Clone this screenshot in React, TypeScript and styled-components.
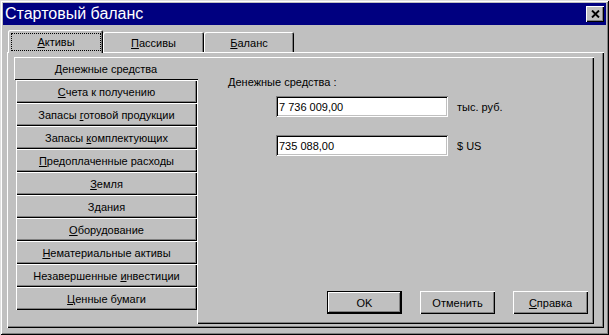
import { FC } from 'react';
import styled, { createGlobalStyle } from 'styled-components';

const GlobalStyle = createGlobalStyle`
  body {
    margin: 0;
    background: #c0c0c0;
  }

  #root {
    font-family: "Liberation Sans", Arial, sans-serif;
    font-size: 11px;
    color: #000;
  }
`;

const raised =
  'inset 1px 1px #fff, inset -1px -1px #000, inset -2px -2px #808080';

const StyledWindow = styled.div`
  width: 609px;
  height: 335px;
  box-sizing: border-box;
  padding: 3px;
  background: #c0c0c0;
  box-shadow: inset 1px 1px #dfdfdf, inset -1px -1px #000,
    inset 2px 2px #fff, inset -2px -2px #808080;
  display: flex;
  flex-direction: column;
`;

const TitleBar = styled.div`
  flex: none;
  height: 22px;
  padding: 0 2px 0 2px;
  background: #000080;
  color: #fff;
  display: flex;
  align-items: center;
  justify-content: space-between;
`;

const Title = styled.div`
  font-size: 16px;
  line-height: 22px;
`;

const CloseButton = styled.button`
  width: 18px;
  height: 16px;
  padding: 0;
  border: none;
  background: #c0c0c0;
  box-shadow: ${raised};
  display: flex;
  align-items: center;
  justify-content: center;
`;

const Body = styled.div`
  flex: 1;
  display: flex;
  flex-direction: column;
  padding: 5px 2px 4px 4px;
`;

const TabStrip = styled.div`
  flex: none;
  height: 22px;
  padding-left: 1px;
  display: flex;
  align-items: flex-end;
  position: relative;
  z-index: 1;
`;

const Tab = styled.div<{ $active?: boolean; $width: number }>`
  box-sizing: border-box;
  width: ${(p) => p.$width}px;
  height: ${(p) => (p.$active ? 23 : 20)}px;
  margin-bottom: ${(p) => (p.$active ? -1 : 0)}px;
  padding: ${(p) => (p.$active ? '4px 3px 3px 4px' : '2px 2px 0 2px')};
  background: #c0c0c0;
  border-radius: 2px 2px 0 0;
  box-shadow: inset 1px 1px #fff, inset -1px 0 #000, inset -2px 0 #808080;
  display: flex;
  align-items: stretch;
  justify-content: center;
`;

const TabFocus = styled.div<{ $focused?: boolean }>`
  flex: 1;
  outline: ${(p) => (p.$focused ? '1px dotted #000' : 'none')};
  display: flex;
  align-items: center;
  justify-content: center;
`;

const TabPanel = styled.div`
  flex: 1;
  display: flex;
  padding: 5px 10px 4px 7px;
  box-shadow: ${raised};
`;

const SideTabs = styled.div`
  flex: none;
  width: 183px;
  display: flex;
  flex-direction: column;
  position: relative;
  z-index: 1;
`;

const SideTab = styled.div<{ $active?: boolean }>`
  flex: none;
  height: 23px;
  margin-left: ${(p) => (p.$active ? 0 : 2)}px;
  margin-right: ${(p) => (p.$active ? -1 : 0)}px;
  background: #c0c0c0;
  box-shadow: ${(p) =>
    p.$active ? 'inset 1px 1px #fff, inset 0 -1px #000' : raised};
  display: flex;
  align-items: center;
  justify-content: center;
  white-space: nowrap;
`;

const Page = styled.div`
  flex: 1;
  display: flex;
  flex-direction: column;
  padding: 19px 6px 10px 31px;
  box-shadow: ${raised};
`;

const Heading = styled.div`
  line-height: 13px;
`;

const Fields = styled.div`
  display: flex;
  flex-direction: column;
  gap: 18px;
  margin: 7px 0 0 48px;
`;

const FieldRow = styled.div`
  display: flex;
  align-items: center;
`;

const Input = styled.input`
  box-sizing: border-box;
  width: 172px;
  height: 21px;
  padding: 1px 2px 0 3px;
  border: none;
  outline: none;
  background: #fff;
  font: inherit;
  color: #000;
  box-shadow: inset 1px 1px #808080, inset -1px -1px #fff,
    inset 2px 2px #000, inset -2px -2px #c0c0c0;
`;

const Unit = styled.span`
  margin-left: 9px;
`;

const Spacer = styled.div`
  flex: 1;
`;

const ButtonRow = styled.div`
  display: flex;
  justify-content: flex-end;
  gap: 18px;
`;

const Button = styled.button<{ $default?: boolean }>`
  width: 75px;
  height: 23px;
  padding: 0;
  border: none;
  background: #c0c0c0;
  font: inherit;
  color: #000;
  box-shadow: ${(p) =>
    p.$default
      ? 'inset 0 0 0 1px #000, inset -2px -2px #000, inset 2px 2px #fff, inset -3px -3px #808080'
      : raised};
`;

// "&" marks the underlined access key, as in a Windows resource
const Label: FC<{ text: string }> = ({ text }) => {
  const i = text.indexOf('&');
  if (i < 0) return <span>{text}</span>;
  return (
    <span>
      {text.slice(0, i)}
      <u>{text[i + 1]}</u>
      {text.slice(i + 2)}
    </span>
  );
};

const tabs = [
  { label: '&Активы', width: 95 },
  { label: '&Пассивы', width: 101 },
  { label: '&Баланс', width: 90 },
];

const assets = [
  '&Денежные средства',
  '&Счета к получению',
  'Запасы &готовой продукции',
  'Запасы &комплектующих',
  '&Предоплаченные расходы',
  '&Земля',
  'З&дания',
  '&Оборудование',
  '&Нематериальные активы',
  'Незавершенные &инвестиции',
  '&Ценные бумаги',
];

const App: FC = () => {
  return (
    <>
      <GlobalStyle />
      <StyledWindow>
        <TitleBar>
          <Title>Стартовый баланс</Title>
          <CloseButton aria-label="Закрыть">
            <svg width="9" height="8" viewBox="0 0 9 8">
              <path
                d="M1 0.5 L8 7.5 M8 0.5 L1 7.5"
                stroke="#000"
                strokeWidth="1.9"
                fill="none"
              />
            </svg>
          </CloseButton>
        </TitleBar>
        <Body>
          <TabStrip>
            {tabs.map((t, i) => (
              <Tab key={t.label} $active={i === 0} $width={t.width}>
                <TabFocus $focused={i === 0}>
                  <Label text={t.label} />
                </TabFocus>
              </Tab>
            ))}
          </TabStrip>
          <TabPanel>
            <SideTabs>
              {assets.map((a, i) => (
                <SideTab key={a} $active={i === 0}>
                  <Label text={a} />
                </SideTab>
              ))}
            </SideTabs>
            <Page>
              <Heading>Денежные средства :</Heading>
              <Fields>
                <FieldRow>
                  <Input defaultValue="7 736 009,00" />
                  <Unit>тыс. руб.</Unit>
                </FieldRow>
                <FieldRow>
                  <Input defaultValue="735 088,00" />
                  <Unit>$ US</Unit>
                </FieldRow>
              </Fields>
              <Spacer />
              <ButtonRow>
                <Button $default>OK</Button>
                <Button>Отменить</Button>
                <Button>
                  <Label text="&Справка" />
                </Button>
              </ButtonRow>
            </Page>
          </TabPanel>
        </Body>
      </StyledWindow>
    </>
  );
};

export default App;
